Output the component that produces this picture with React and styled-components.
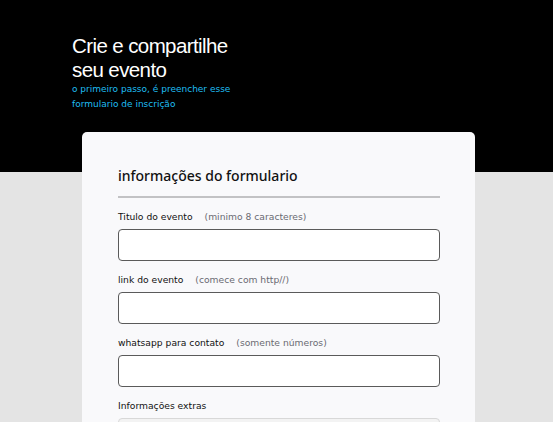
import React from "react";
import styled, { createGlobalStyle } from "styled-components";

const Global = createGlobalStyle`
  html, body { margin: 0; padding: 0; }
  body { background: #e4e4e4; }
  * { box-sizing: border-box; }
`;

const Page = styled.div`
  min-height: 100vh;
  background: linear-gradient(to bottom, #000 0, #000 172px, #e4e4e4 172px);
  padding-bottom: 40px;
`;

const Hero = styled.header`
  padding: 34px 0 0 72px;
  display: flex;
  flex-direction: column;
`;

const Title = styled.h1`
  margin: 0;
  font-family: "Liberation Sans", Arial, sans-serif;
  font-weight: 400;
  font-size: 20.5px;
  line-height: 24px;
  color: #fff;
  letter-spacing: -0.6px;
`;

const Subtitle = styled.p`
  margin: 0;
  font-family: "DejaVu Sans", sans-serif;
  font-size: 9px;
  line-height: 15px;
  color: #1fbdf2;
  width: 200px;
`;

const Card = styled.section`
  width: 393px;
  margin: 20px 0 0 82px;
  background: #f9f9fb;
  border-radius: 5px;
  padding: 32px 35px 40px 36px;
  display: flex;
  flex-direction: column;
`;

const Heading = styled.h2`
  margin: 0;
  font-family: "Noto Sans", sans-serif;
  font-weight: 500;
  font-size: 14px;
  line-height: 24px;
  color: #111;
  padding-bottom: 8px;
  border-bottom: 2px solid #c2c2c4;
  margin-bottom: 12px;
`;

const Field = styled.div`
  display: flex;
  flex-direction: column;
  margin-bottom: 12px;
`;

const Label = styled.label`
  display: flex;
  gap: 12px;
  font-family: "DejaVu Sans", sans-serif;
  font-size: 9.2px;
  line-height: 13px;
  color: #111;
  margin-bottom: 6px;
`;

const Hint = styled.span`
  color: #6a6a72;
`;

const Input = styled.input`
  height: 32px;
  width: 100%;
  border: 1px solid ${(p) => (p.$light ? "#d8d8d8" : "#5a5a5a")};
  border-radius: 4px;
  background: ${(p) => (p.$light ? "#f3f3f3" : "#fff")};
  outline: none;
  padding: 0 8px;
`;

const fields = [
  { label: "Titulo do evento", hint: "(minimo 8 caracteres)" },
  { label: "link do evento", hint: "(comece com http//)" },
  { label: "whatsapp para contato", hint: "(somente números)" },
  { label: "Informações extras", light: true },
];

export default function App() {
  return (
    <Page>
      <Global />
      <Hero>
        <Title>
          Crie e compartilhe
          <br />
          seu evento
        </Title>
        <Subtitle>o primeiro passo, é preencher esse formulario de inscrição</Subtitle>
      </Hero>
      <Card>
        <Heading>informações do formulario</Heading>
        {fields.map((f) => (
          <Field key={f.label}>
            <Label>
              <span>{f.label}</span>
              {f.hint && <Hint>{f.hint}</Hint>}
            </Label>
            <Input $light={f.light} />
          </Field>
        ))}
      </Card>
    </Page>
  );
}
